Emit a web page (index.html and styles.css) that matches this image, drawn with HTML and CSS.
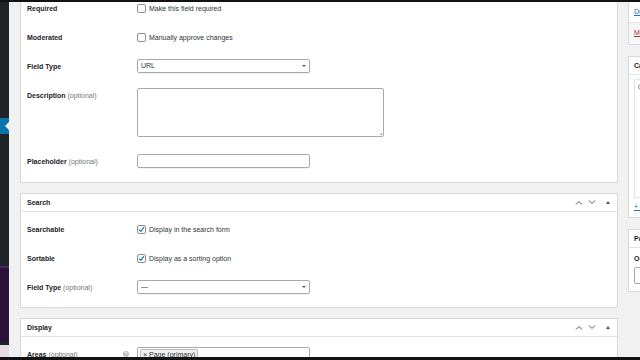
FILE: index.html
```html
<!DOCTYPE html>
<html lang="en">
<head>
    <meta charset="UTF-8">
    <meta name="viewport" content="width=device-width, initial-scale=1.0">
    <title>Edit Field</title>
    <link rel="stylesheet" href="styles.css">
</head>
<body>
    <div class="screen">
        <div class="adminmenu">
            <div class="menu-current"></div>
            <div class="menu-plugin"></div>
            <div class="menu-bottom"></div>
        </div>

        <div class="wrap">
            <div class="main">
                <!-- General -->
                <div class="postbox first">
                    <div class="inside">
                        <div class="row">
                            <div class="label">Required</div>
                            <label class="check"><span class="box"></span>Make this field required</label>
                        </div>
                        <div class="row">
                            <div class="label">Moderated</div>
                            <label class="check"><span class="box"></span>Manually approve changes</label>
                        </div>
                        <div class="row">
                            <div class="label">Field Type</div>
                            <div class="select">URL<span class="caret"></span></div>
                        </div>
                        <div class="row">
                            <div class="label">Description <span class="opt">(optional)</span></div>
                            <div class="textarea"><span class="grip"></span></div>
                        </div>
                        <div class="row">
                            <div class="label">Placeholder <span class="opt">(optional)</span></div>
                            <div class="input"></div>
                        </div>
                    </div>
                </div>

                <!-- Search -->
                <div class="postbox">
                    <div class="hndle">
                        <span>Search</span>
                        <div class="handle-actions">
                            <svg width="8" height="5" viewBox="0 0 8 5"><path d="M1 4.5L4 1.5L7 4.5" fill="none" stroke="#50575e" stroke-width="1"/></svg>
                            <svg width="8" height="5" viewBox="0 0 8 5"><path d="M1 0.5L4 3.5L7 0.5" fill="none" stroke="#50575e" stroke-width="1"/></svg>
                            <svg class="toggle" width="4" height="3" viewBox="0 0 4 3"><path d="M0 3L2 0L4 3Z" fill="#50575e"/></svg>
                        </div>
                    </div>
                    <div class="inside">
                        <div class="row">
                            <div class="label">Searchable</div>
                            <label class="check"><span class="box checked"><svg width="7" height="7" viewBox="0 0 7 7"><path d="M1 3.6L2.8 5.4L6 1.2" fill="none" stroke="#2271b1" stroke-width="1.2"/></svg></span>Display in the search form</label>
                        </div>
                        <div class="row">
                            <div class="label">Sortable</div>
                            <label class="check"><span class="box checked"><svg width="7" height="7" viewBox="0 0 7 7"><path d="M1 3.6L2.8 5.4L6 1.2" fill="none" stroke="#2271b1" stroke-width="1.2"/></svg></span>Display as a sorting option</label>
                        </div>
                        <div class="row">
                            <div class="label">Field Type <span class="opt">(optional)</span></div>
                            <div class="select">&mdash;<span class="caret"></span></div>
                        </div>
                    </div>
                </div>

                <!-- Display -->
                <div class="postbox">
                    <div class="hndle">
                        <span>Display</span>
                        <div class="handle-actions">
                            <svg width="8" height="5" viewBox="0 0 8 5"><path d="M1 4.5L4 1.5L7 4.5" fill="none" stroke="#50575e" stroke-width="1"/></svg>
                            <svg width="8" height="5" viewBox="0 0 8 5"><path d="M1 0.5L4 3.5L7 0.5" fill="none" stroke="#50575e" stroke-width="1"/></svg>
                            <svg class="toggle" width="4" height="3" viewBox="0 0 4 3"><path d="M0 3L2 0L4 3Z" fill="#50575e"/></svg>
                        </div>
                    </div>
                    <div class="inside">
                        <div class="row">
                            <div class="label label-help">
                                <span>Areas <span class="opt">(optional)</span></span>
                                <span class="help">?</span>
                            </div>
                            <div class="input tags"><span class="tag">&times; Page (primary)</span></div>
                        </div>
                    </div>
                </div>
            </div>

            <div class="side">
                <div class="sidebox publish">
                    <div class="misc"><a class="link">Duplicate</a></div>
                    <div class="major"><a class="trash">Move to Trash</a></div>
                </div>
                <div class="sidebox">
                    <div class="side-title">Categories</div>
                    <div class="side-inside">
                        <div class="checklist"><span class="dot"></span></div>
                        <a class="link add">+ Add New Category</a>
                    </div>
                </div>
                <div class="sidebox">
                    <div class="side-title">Page Attributes</div>
                    <div class="side-inside">
                        <div class="side-label">Order</div>
                        <div class="side-input"></div>
                    </div>
                </div>
            </div>
        </div>
    </div>
</body>
</html>
```

FILE: styles.css
```css
/* Global */
body {
    margin: 0;
    height: 360px;
    overflow: hidden;
    background-color: #121212;
    font-family: "Liberation Sans", Arial, sans-serif;
    font-size: 7px;
    color: #1d2327;
}

.screen {
    display: flex;
    height: 355px;
    margin-top: 2px;
    overflow: hidden;
}

/* Admin menu strip */
.adminmenu {
    width: 9px;
    flex: none;
    background-color: #1f2428;
    display: flex;
    flex-direction: column;
}

.menu-current {
    height: 16px;
    margin-top: 116px;
    background-color: #0a74ad;
    position: relative;
}

.menu-current::after {
    content: "";
    position: absolute;
    right: 0;
    top: 4px;
    border: 4px solid transparent;
    border-right-color: #f1f1f1;
}

.menu-plugin {
    height: 76px;
    margin-top: 132px;
    background-color: #2a1238;
    border-top: 2px solid #4a2a5c;
}

.menu-bottom {
    height: 12px;
    margin-top: 3px;
    background-color: #e9dbe6;
}

/* Content area */
.wrap {
    flex: 1;
    display: flex;
    gap: 10px;
    padding-left: 11px;
    background-color: #f1f1f1;
    overflow: hidden;
}

.main {
    width: 598px;
    flex: none;
    display: flex;
    flex-direction: column;
    gap: 10px;
}

.postbox {
    background-color: #fff;
    border: 1px solid #d6d8da;
}

.postbox.first {
    margin-top: -9px;
}

.hndle {
    height: 17px;
    display: flex;
    align-items: center;
    justify-content: space-between;
    padding: 0 6px;
    border-bottom: 1px solid #e2e4e7;
    font-weight: bold;
}

.handle-actions {
    display: flex;
    align-items: center;
    gap: 5px;
    padding-right: 1px;
}

.handle-actions .toggle {
    margin-left: 5px;
}

.inside {
    padding: 0 0 5px;
}

.postbox.first .inside {
    padding-bottom: 6px;
}

.hndle + .inside {
    padding-top: 3px;
}

/* Form rows */
.row {
    display: flex;
    align-items: flex-start;
    padding: 7px 0 7px 6px;
}

.label {
    width: 110px;
    flex: none;
    line-height: 15px;
    font-weight: bold;
}

.label .opt {
    font-weight: normal;
    color: #72777c;
}

.label-help {
    display: flex;
    justify-content: space-between;
    padding-right: 8px;
    box-sizing: border-box;
}

.help {
    width: 6px;
    height: 6px;
    margin-top: 4px;
    border-radius: 50%;
    background-color: #b8bcc0;
    color: #fff;
    font-size: 5px;
    line-height: 6px;
    text-align: center;
    font-weight: normal;
}

.check {
    display: flex;
    align-items: center;
    gap: 3px;
    line-height: 15px;
    color: #2c3338;
}

.box {
    width: 9px;
    height: 9px;
    box-sizing: border-box;
    border: 1px solid #8c8f94;
    border-radius: 2px;
    display: flex;
    align-items: center;
    justify-content: center;
}

.select,
.input {
    width: 173px;
    height: 14px;
    box-sizing: border-box;
    border: 1px solid #a7aaad;
    border-radius: 2px;
    box-shadow: 0 1px 1px rgba(0, 0, 0, 0.06);
    padding: 0 3px;
    line-height: 12px;
    color: #2c3338;
    display: flex;
    align-items: center;
    justify-content: space-between;
}

.caret {
    border: 2px solid transparent;
    border-top: 2px solid #50575e;
    margin-top: 2px;
}

.textarea {
    width: 247px;
    height: 49px;
    margin-bottom: 3px;
    box-sizing: border-box;
    border: 1px solid #a7aaad;
    border-radius: 2px;
    position: relative;
}

.grip {
    position: absolute;
    right: 1px;
    bottom: 1px;
    width: 3px;
    height: 3px;
    background: linear-gradient(135deg, transparent 50%, #a7aaad 50%);
}

.tags {
    justify-content: flex-start;
    padding: 0 2px;
    align-items: flex-start;
    padding-top: 1px;
}

.tag {
    padding: 0 2px;
    border: 1px solid #b4b9be;
    border-radius: 2px;
    background-color: #f0f0f1;
    line-height: 10px;
}

/* Sidebar */
.side {
    width: 160px;
    flex: none;
    display: flex;
    flex-direction: column;
    gap: 11px;
}

.sidebox {
    background-color: #fff;
    border: 1px solid #d6d8da;
}

.publish {
    margin-top: -9px;
}

.misc {
    padding: 14px 5px 7px;
}

.major {
    padding: 6px 5px 8px;
    background-color: #f6f7f7;
    border-top: 1px solid #e2e4e7;
}

.link {
    color: #2271b1;
    text-decoration: underline;
}

.trash {
    color: #b32d2e;
    text-decoration: underline;
}

.side-title {
    height: 17px;
    line-height: 17px;
    padding: 0 5px;
    font-weight: bold;
    border-bottom: 1px solid #e2e4e7;
}

.side-inside {
    padding: 4px 5px 7px;
}

.checklist {
    height: 109px;
    border: 1px solid #e2e4e7;
    padding: 4px 3px;
}

.dot {
    display: block;
    width: 4px;
    height: 4px;
    border: 1px solid #8c8f94;
    border-radius: 50%;
}

.add {
    display: block;
    margin-top: 5px;
}

.side-label {
    font-weight: bold;
    line-height: 10px;
    margin-top: 2px;
}

.side-input {
    width: 60px;
    height: 15px;
    margin-top: 3px;
    border: 1px solid #a7aaad;
    border-radius: 2px;
}
```
